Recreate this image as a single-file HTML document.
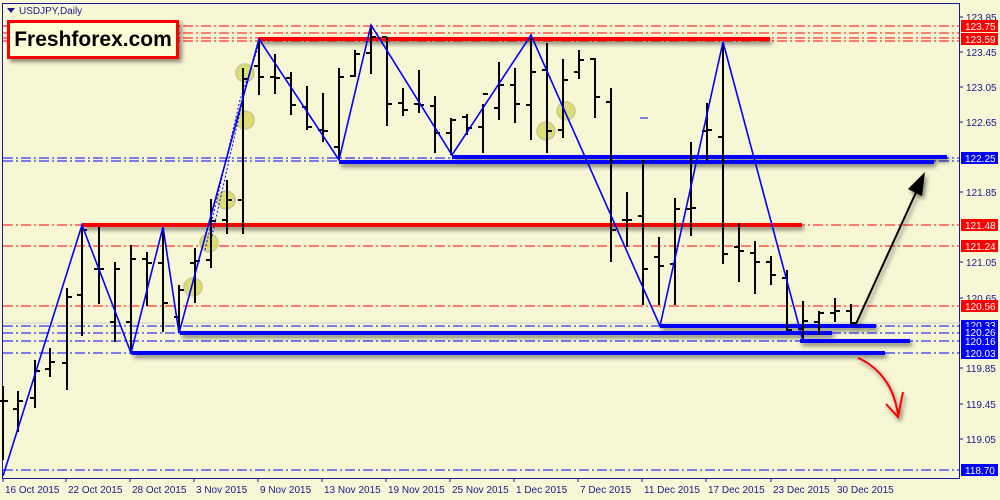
<!DOCTYPE html>
<html><head><meta charset="utf-8"><style>
html,body{margin:0;padding:0;background:#f7f7d5;width:1000px;height:500px;overflow:hidden;font-family:"Liberation Sans",sans-serif}
svg{position:absolute;left:0;top:0}
.logo{position:absolute;left:7px;top:20px;width:166px;height:33px;border:3px solid #f00;background:#fdfdd6;box-shadow:3px 3px 4px rgba(0,0,0,.45);font:bold 21px "Liberation Sans",sans-serif;line-height:33px;text-align:center;color:#000}
</style></head><body>
<svg width="1000" height="500" xmlns="http://www.w3.org/2000/svg" font-family="Liberation Sans, sans-serif">
<defs><filter id="sh"><feDropShadow dx="2" dy="3" stdDeviation="2" flood-opacity="0.5"/></filter></defs>
<rect x="0" y="0" width="1000" height="500" fill="#f7f7d5"/>
<rect x="2.5" y="3.5" width="957" height="475" fill="none" stroke="#1a1a9a" stroke-width="1"/>
<g stroke-width="1" stroke-dasharray="10,3,2,3" fill="none">
<line x1="3" y1="26" x2="960" y2="26" stroke="#f00"/>
<line x1="3" y1="33" x2="960" y2="33" stroke="#f00"/>
<line x1="3" y1="38" x2="960" y2="38" stroke="#f00"/>
<line x1="3" y1="41" x2="960" y2="41" stroke="#f00"/>
<line x1="3" y1="225" x2="960" y2="225" stroke="#f00"/>
<line x1="3" y1="246" x2="960" y2="246" stroke="#f00"/>
<line x1="3" y1="306" x2="960" y2="306" stroke="#f00"/>
<line x1="3" y1="158" x2="960" y2="158" stroke="#0000ff"/>
<line x1="3" y1="161" x2="960" y2="161" stroke="#0000ff"/>
<line x1="3" y1="326" x2="960" y2="326" stroke="#0000ff"/>
<line x1="3" y1="333" x2="960" y2="333" stroke="#0000ff"/>
<line x1="3" y1="341" x2="960" y2="341" stroke="#0000ff"/>
<line x1="3" y1="353" x2="960" y2="353" stroke="#0000ff"/>
<line x1="3" y1="470" x2="960" y2="470" stroke="#0000ff"/>
</g>
<line x1="3" y1="323" x2="960" y2="323" stroke="#ccc" stroke-width="1"/>
<g filter="url(#sh)" stroke-width="4">
<line x1="259" y1="39" x2="770" y2="39" stroke="#f00"/>
<line x1="82" y1="225" x2="802" y2="225" stroke="#f00"/>
<line x1="452" y1="157" x2="947" y2="157" stroke="#0000ff"/>
<line x1="339" y1="162" x2="934" y2="162" stroke="#0000ff"/>
<line x1="660" y1="326" x2="876" y2="326" stroke="#0000ff"/>
<line x1="180" y1="333" x2="832" y2="333" stroke="#0000ff"/>
<line x1="800" y1="341" x2="910" y2="341" stroke="#0000ff"/>
<line x1="132" y1="353" x2="885" y2="353" stroke="#0000ff"/>
</g>
<g fill="#d8d860" fill-opacity="0.85" stroke="#c8c890" stroke-width="1.5">
<circle cx="245" cy="73" r="9"/><circle cx="245" cy="120" r="9"/><circle cx="226" cy="200" r="9"/>
<circle cx="209" cy="243" r="9"/><circle cx="193" cy="287" r="9"/><circle cx="566" cy="111" r="9"/><circle cx="546" cy="131" r="9"/>
</g>
<g stroke="#000" stroke-width="2" fill="none" id="bars"></g>
<polyline points="3,476 82,225 131,353 163,227 179,333 259,39 339,160 371,25 452,155 531,35 660,326 723,42 803,341" fill="none" stroke="#0000ff" stroke-width="1.6"/>
<polyline points="211,240 245,90 259,39" fill="none" stroke="#0000ff" stroke-width="1" stroke-dasharray="2,2"/>
<polyline points="205,250 240,100 259,45" fill="none" stroke="#0000ff" stroke-width="1" stroke-dasharray="2,2"/>
<line x1="640" y1="118" x2="648" y2="118" stroke="#0000ff"/>
<g filter="url(#sh)">
<line x1="855" y1="326" x2="918" y2="188" stroke="#000" stroke-width="2"/>
<polygon points="925,172 922,196 908,189" fill="#000"/>
</g>
<g filter="url(#sh)" fill="none" stroke="#f00" stroke-width="2">
<path d="M858,358 C868,362 878,370 885,380 C892,390 895,398 898,414"/>
<path d="M886,404 L898,417 L903,392"/>
</g>
<g font-size="10" fill="#1a1a8c">
<text x="966" y="21">123.85</text><text x="966" y="56">123.45</text><text x="966" y="91">123.05</text>
<text x="966" y="126">122.65</text><text x="966" y="196">121.85</text><text x="966" y="266">121.05</text>
<text x="966" y="302">120.65</text><text x="966" y="372">119.85</text><text x="966" y="408">119.45</text>
<text x="966" y="443">119.05</text>
</g>
<g stroke="#1a1a8c"><line x1="960" y1="17" x2="963" y2="17"/><line x1="960" y1="52" x2="963" y2="52"/><line x1="960" y1="87" x2="963" y2="87"/><line x1="960" y1="122" x2="963" y2="122"/><line x1="960" y1="192" x2="963" y2="192"/><line x1="960" y1="262" x2="963" y2="262"/><line x1="960" y1="298" x2="963" y2="298"/><line x1="960" y1="368" x2="963" y2="368"/><line x1="960" y1="404" x2="963" y2="404"/><line x1="960" y1="439" x2="963" y2="439"/></g>
<g font-size="10" fill="#fff">
<rect x="961" y="20" width="37" height="12" fill="#f00"/><text x="965" y="30">123.75</text>
<rect x="961" y="33" width="37" height="12" fill="#f00"/><text x="965" y="43">123.59</text>
<rect x="961" y="219" width="37" height="12" fill="#f00"/><text x="965" y="229">121.48</text>
<rect x="961" y="240" width="37" height="12" fill="#f00"/><text x="965" y="250">121.24</text>
<rect x="961" y="300" width="37" height="12" fill="#f00"/><text x="965" y="310">120.56</text>
<rect x="961" y="152" width="37" height="12" fill="#00f"/><text x="965" y="162">122.25</text>
<rect x="961" y="320" width="37" height="11" fill="#00f"/><text x="965" y="329">120.33</text>
<rect x="961" y="327" width="37" height="11" fill="#00f"/><text x="965" y="336">120.26</text>
<rect x="961" y="336" width="37" height="11" fill="#00f"/><text x="965" y="345">120.16</text>
<rect x="961" y="347" width="37" height="12" fill="#00f"/><text x="965" y="357">120.03</text>
<rect x="961" y="464" width="37" height="12" fill="#00f"/><text x="965" y="474">118.70</text>
</g>
<g font-size="10" fill="#1a1a8c" id="dates"></g>
<polygon points="7,8 15,8 11,13" fill="#1a1a8c"/>
<text x="19" y="14" font-size="10" fill="#1a1a8c">USDJPY,Daily</text>
</svg>
<div class="logo">Freshforex.com</div>
<script>
var B=[[3,386,460,401,401],[18,391,432,409,401],[35,360,408,398,371],[50,348,377,369,362],[67,288,390,363,297],[82,227,336,295,230],[99,227,304,269,269],[115,262,342,322,269],[131,245,352,322,259],[147,252,306,259,263],[163,227,332,263,303],[179,285,333,317,290],[195,248,303,263,261],[211,199,268,260,221],[227,180,234,220,200],[243,68,234,200,79],[259,40,95,66,77],[275,54,94,77,78],[291,72,115,78,105],[307,86,130,107,127],[323,93,142,130,131],[339,68,160,147,77],[355,50,77,76,54],[371,25,74,53,37],[387,37,126,37,104],[403,88,116,103,110],[419,70,113,104,105],[435,96,153,106,133],[451,118,155,133,120],[467,114,135,117,128],[483,104,153,127,94],[499,62,120,108,85],[515,68,123,85,104],[531,38,140,105,72],[547,43,153,70,131],[563,59,138,130,80],[579,50,79,72,60],[595,58,118,59,97],[611,88,262,102,230],[627,192,247,220,220],[643,160,305,216,269],[659,237,305,257,266],[675,198,305,264,209],[691,142,236,209,208],[707,103,161,131,130],[723,42,264,137,254],[739,223,282,247,251],[755,241,294,253,262],[771,256,285,262,275],[787,270,331,278,330],[803,301,340,329,321],[819,311,335,322,313],[835,298,322,313,311],[851,304,325,311,323]];
var g=document.getElementById('bars'),h='';
B.forEach(function(b){h+='<line x1="'+b[0]+'" y1="'+b[1]+'" x2="'+b[0]+'" y2="'+b[2]+'"/><line x1="'+(b[0]-5)+'" y1="'+b[3]+'" x2="'+b[0]+'" y2="'+b[3]+'"/><line x1="'+b[0]+'" y1="'+b[4]+'" x2="'+(b[0]+5)+'" y2="'+b[4]+'"/>';});
g.innerHTML=h;
var D=['16 Oct 2015','22 Oct 2015','28 Oct 2015','3 Nov 2015','9 Nov 2015','13 Nov 2015','19 Nov 2015','25 Nov 2015','1 Dec 2015','7 Dec 2015','11 Dec 2015','17 Dec 2015','23 Dec 2015','30 Dec 2015'];
var X=[3,66,130,194,258,322,386,450,514,578,642,706,771,835],d='';
D.forEach(function(t,i){d+='<line x1="'+X[i]+'" y1="478" x2="'+X[i]+'" y2="482" stroke="#1a1a8c"/><text x="'+(X[i]+2)+'" y="493">'+t+'</text>';});
document.getElementById('dates').innerHTML=d;
</script>
</body></html>
